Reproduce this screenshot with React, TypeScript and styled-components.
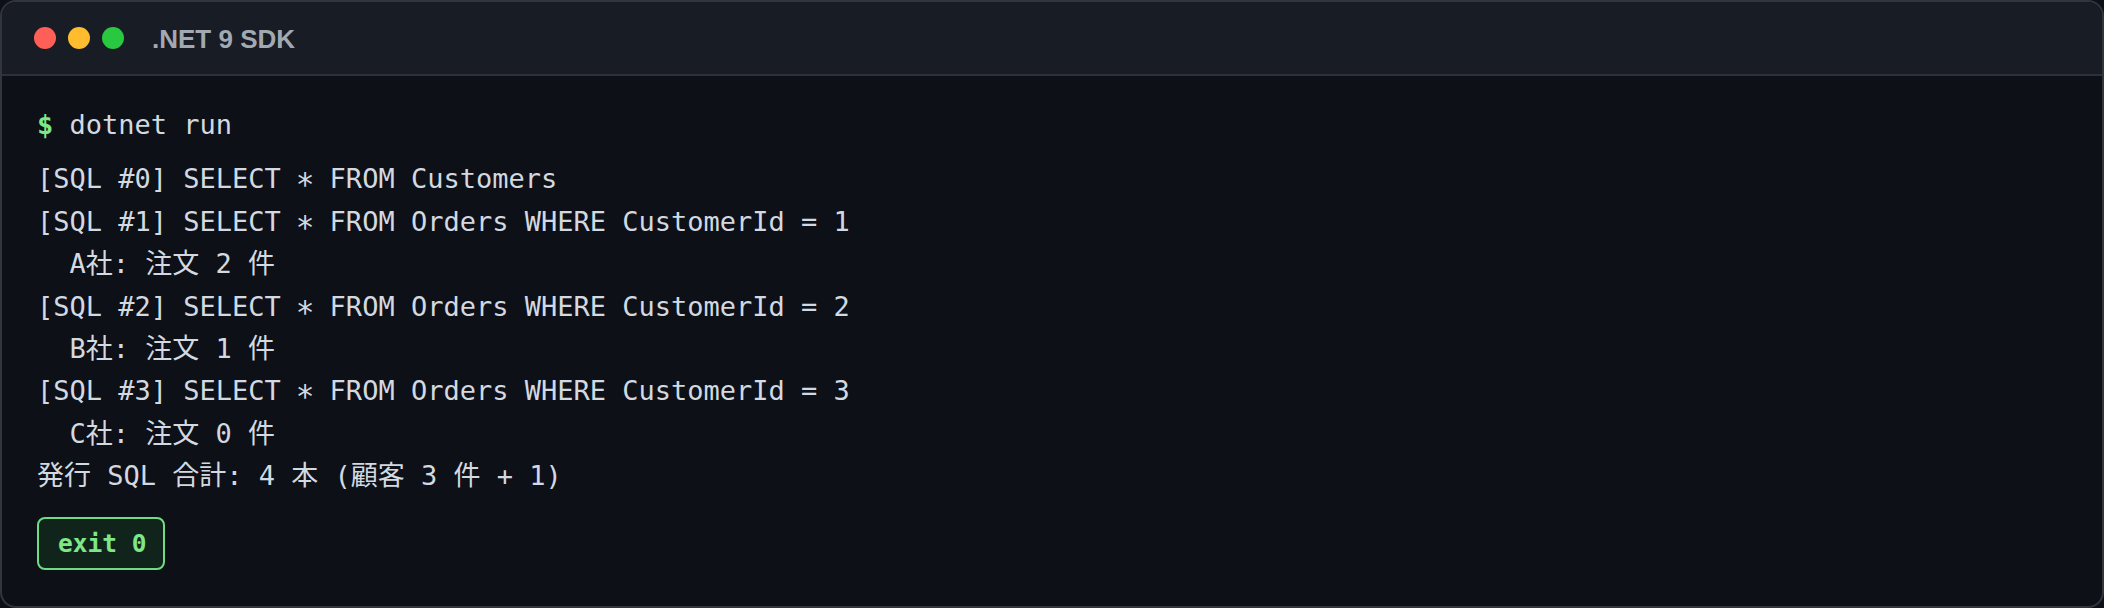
import React from "react";
import styled, { createGlobalStyle } from "styled-components";

const GlobalStyle = createGlobalStyle`
  html, body {
    margin: 0;
    padding: 0;
    background: #0d1117;
  }
  * { box-sizing: border-box; }
`;

const Window = styled.div`
  height: 608px;
  border: 2px solid #30353e;
  border-radius: 16px;
  overflow: hidden;
  background: #0d1017;
  display: flex;
  flex-direction: column;
`;

const TitleBar = styled.div`
  height: 74px;
  flex: none;
  background: #181c24;
  border-bottom: 2px solid #2b3039;
  display: flex;
  align-items: center;
  padding: 0 32px;
`;

const Lights = styled.div`
  display: flex;
  gap: 12px;
`;

const Light = styled.span<{ $color: string }>`
  width: 22px;
  height: 22px;
  border-radius: 50%;
  background: ${(p) => p.$color};
`;

const Title = styled.div`
  margin-left: 28px;
  font-family: "Liberation Sans", Arial, sans-serif;
  font-weight: 700;
  font-size: 26px;
  color: #a2a9b2;
  padding-top: 2px;
`;

const Terminal = styled.div`
  padding: 28px 35px;
  font-family: "DejaVu Sans Mono", "Noto Sans CJK JP", monospace;
  font-size: 27px;
  line-height: 42.4px;
  color: #d3d9e0;
`;

const Command = styled.div`
  white-space: pre;
  margin-bottom: 12px;
`;

const Prompt = styled.span`
  color: #7ee787;
  font-weight: 700;
`;

const Line = styled.div`
  white-space: pre;
`;

const Star = styled.span`
  display: inline-block;
  transform: translateY(0.2em) scale(1.15);
`;

const ExitBadge = styled.div`
  display: inline-block;
  margin-top: 19px;
  padding: 6px 16px 6px 19px;
  border: 2px solid #6fdc82;
  border-radius: 8px;
  background: #11241b;
  color: #7ee787;
  font-weight: 700;
  font-size: 24.5px;
  line-height: 37px;
`;

const lines = [
  "[SQL #0] SELECT * FROM Customers",
  "[SQL #1] SELECT * FROM Orders WHERE CustomerId = 1",
  "  A社: 注文 2 件",
  "[SQL #2] SELECT * FROM Orders WHERE CustomerId = 2",
  "  B社: 注文 1 件",
  "[SQL #3] SELECT * FROM Orders WHERE CustomerId = 3",
  "  C社: 注文 0 件",
  "発行 SQL 合計: 4 本 (顧客 3 件 + 1)",
];

function renderLine(text: string) {
  const parts = text.split("*");
  return parts.map((p, i) => (
    <React.Fragment key={i}>
      {p}
      {i < parts.length - 1 && <Star>*</Star>}
    </React.Fragment>
  ));
}

export default function App() {
  return (
    <>
      <GlobalStyle />
      <Window>
        <TitleBar>
          <Lights>
            <Light $color="#ff5f57" />
            <Light $color="#febc2e" />
            <Light $color="#28c840" />
          </Lights>
          <Title>.NET 9 SDK</Title>
        </TitleBar>
        <Terminal>
          <Command>
            <Prompt>$</Prompt> dotnet run
          </Command>
          {lines.map((l, i) => (
            <Line key={i}>{renderLine(l)}</Line>
          ))}
          <ExitBadge>exit 0</ExitBadge>
        </Terminal>
      </Window>
    </>
  );
}
